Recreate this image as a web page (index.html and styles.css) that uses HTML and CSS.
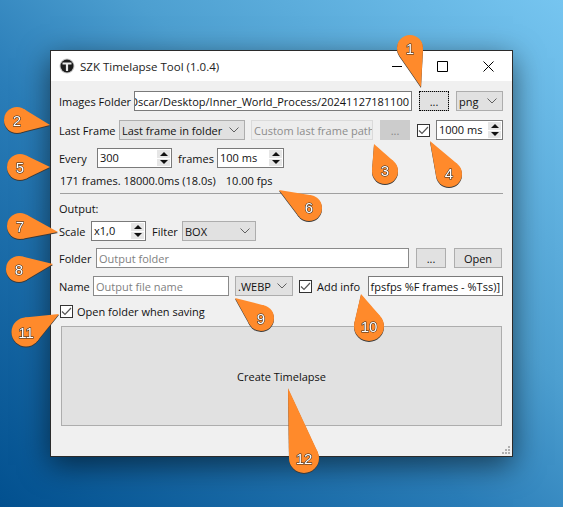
FILE: index.html
```html
<!DOCTYPE html>
<html lang="en">
<head>
<meta charset="utf-8">
<title>SZK Timelapse Tool</title>
<link rel="stylesheet" href="styles.css">
</head>
<body>
<main class="window">
  <header class="titlebar">
    <svg class="app-icon" width="16" height="16" viewBox="0 0 16 16"><circle cx="8" cy="8" r="7.5" fill="#c8c8c8"/><circle cx="8" cy="8" r="6.5" fill="#1c1c1c"/><path d="M3.5 4.5h9v2h-3.4v6.5h-2.2V6.5H3.5z" fill="#e8e8e8"/></svg>
    <span class="title">SZK Timelapse Tool (1.0.4)</span>
    <div class="winbtns">
      <svg width="10" height="10" viewBox="0 0 10 10"><path d="M0 5.5h10" stroke="#000" fill="none"/></svg>
      <svg width="11" height="11" viewBox="0 0 11 11"><path d="M.5.5h10v10H.5z" stroke="#000" fill="none"/></svg>
      <svg width="11" height="11" viewBox="0 0 11 11"><path d="M.5.5l10 10M10.5.5l-10 10" stroke="#000" fill="none"/></svg>
    </div>
  </header>
  <section class="content">
    <div class="row">
      <span class="label w69">Images Folder</span>
      <div class="field w278 clip-left"><span>C:/Users/Oscar/Desktop/Inner_World_Process/20241127181100</span></div>
      <button class="btn w30 ml1 focused">...</button>
      <div class="select w47 ml1">png<svg class="chev" width="10" height="6" viewBox="0 0 10 6"><path d="M.5.5L5 5 9.500.5" /></svg></div>
    </div>
    <div class="row mt9">
      <span class="label w54">Last Frame</span>
      <div class="select w126">Last frame in folder<svg class="chev" width="10" height="6" viewBox="0 0 10 6"><path d="M.5.5L5 5 9.500.5" /></svg></div>
      <div class="field disabled w122">Custom last frame path</div>
      <button class="btn btn-disabled w30 ml1">...</button>
      <span class="check ml1"><svg width="11" height="9" viewBox="0 0 11 9"><path d="M1 4.500l3 3 6-6.500"/></svg></span>
      <div class="spin w67"><span class="spin-value">1000 ms</span><span class="spin-btns"><i class="up"></i><i class="down"></i></span></div>
    </div>
    <div class="row mt8">
      <span class="label w32">Every</span>
      <div class="spin w75"><span class="spin-value">300</span><span class="spin-btns"><i class="up"></i><i class="down"></i></span></div>
      <span class="label w33">frames</span>
      <div class="spin w67"><span class="spin-value">100 ms</span><span class="spin-btns"><i class="up"></i><i class="down"></i></span></div>
    </div>
    <div class="info"><span>171 frames. 18000.0ms (18.0s)</span><span>10.00 fps</span></div>
    <hr class="sep">
    <div class="heading">Output:</div>
    <div class="row mt4">
      <span class="label w26">Scale</span>
      <div class="spin w55"><span class="spin-value">x1,0</span><span class="spin-btns"><i class="up"></i><i class="down"></i></span></div>
      <span class="label w24">Filter</span>
      <div class="select w74">BOX<svg class="chev" width="10" height="6" viewBox="0 0 10 6"><path d="M.5.5L5 5 9.500.5" /></svg></div>
    </div>
    <div class="row mt7">
      <span class="label w31">Folder</span>
      <div class="field placeholder w313">Output folder</div>
      <button class="btn w30 ml1">...</button>
      <button class="btn w48 ml2">Open</button>
    </div>
    <div class="row mt8">
      <span class="label w28">Name</span>
      <div class="field placeholder w136">Output file name</div>
      <div class="select w58">.WEBP<svg class="chev" width="10" height="6" viewBox="0 0 10 6"><path d="M.5.5L5 5 9.500.5" /></svg></div>
      <label class="checkline"><span class="check"><svg width="11" height="9" viewBox="0 0 11 9"><path d="M1 4.500l3 3 6-6.500"/></svg></span><span class="label w45">Add info</span></label>
      <div class="field w135 clip-left"><span>fpsfps %F frames - %Tss)]</span></div>
    </div>
    <label class="checkline open-line"><span class="check"><svg width="11" height="9" viewBox="0 0 11 9"><path d="M1 4.500l3 3 6-6.500"/></svg></span><span class="label">Open folder when saving</span></label>
    <button class="btn create">Create Timelapse</button>
  </section>
  <svg class="grip" width="9" height="9" viewBox="0 0 9 9"><path d="M6 0h2v2H6zM3 3h2v2H3zM6 3h2v2H6zM0 6h2v2H0zM3 6h2v2H3zM6 6h2v2H6z"/></svg>
</main>
<svg class="pins" width="563" height="507" viewBox="0 0 563 507">
  <g class="pin"><circle cx="410" cy="48" r="13"/><polygon points="399.300,55.400 421,87 423,48.700"/><text x="410" y="54">1</text></g>
  <g class="pin"><circle cx="17" cy="120" r="13"/><polygon points="20.200,132.600 50,125 23.800,109"/><text x="17" y="126">2</text></g>
  <g class="pin"><circle cx="385" cy="171" r="13"/><polygon points="393.600,161.200 374,144 372,170"/><text x="385" y="176">3</text></g>
  <g class="pin"><circle cx="449" cy="174" r="13"/><polygon points="457.400,164 430,141 436.200,176.300"/><text x="449" y="179">4</text></g>
  <g class="pin"><circle cx="20" cy="167" r="13"/><polygon points="25.600,178.700 50,167 25.600,155.300"/><text x="20" y="173">5</text></g>
  <g class="pin"><circle cx="309" cy="208" r="13"/><polygon points="311.100,195.200 279,190 298.700,215.900"/><text x="309" y="213">6</text></g>
  <g class="pin"><circle cx="20" cy="226" r="13"/><polygon points="22.400,238.800 58,232 26.200,214.600"/><text x="20" y="232">7</text></g>
  <g class="pin"><circle cx="19" cy="269" r="13"/><polygon points="25.600,280.200 53,264 22.200,256.400"/><text x="19" y="275">8</text></g>
  <g class="pin"><circle cx="261" cy="318" r="13"/><polygon points="264.200,305.400 235,298 249.600,324.300"/><text x="261" y="324">9</text></g>
  <g class="pin"><circle cx="369" cy="326" r="15"/><polygon points="380.300,316.200 361,294 354.400,322.600"/><text x="369" y="332">10</text></g>
  <g class="pin"><circle cx="26" cy="332" r="14.500"/><polygon points="37.300,341.100 59,314 24.500,317.600"/><text x="26" y="338">11</text></g>
  <g class="pin"><circle cx="304" cy="458" r="15"/><polygon points="317.600,451.700 288,388 289,458.200"/><text x="304" y="464">12</text></g>
</svg>
</body>
</html>
```
FILE: styles.css
```css
* { box-sizing: border-box; }
html, body { margin: 0; height: 100%; }
body {
  width: 563px;
  height: 507px;
  overflow: hidden;
  position: relative;
  background: linear-gradient(to top right, #02508f 0%, #2a7db8 42%, #4d9fd0 62%, #76c5f0 100%);
  font-family: "Open Sans", "Noto Sans", sans-serif;
  font-size: 11px;
  color: #111;
}
.window {
  position: absolute;
  left: 50px;
  top: 50px;
  width: 463px;
  height: 407px;
  background: #f0f0f0;
  border: 1px solid #2b2b2b;
  box-shadow: 0 8px 28px rgba(0, 0, 0, .55);
  display: flex;
  flex-direction: column;
}
.titlebar {
  height: 30px;
  background: #fff;
  display: flex;
  align-items: center;
  padding-left: 8px;
}
.title { margin-left: 5px; font-size: 11.500px; color: #222; }
.app-icon { flex: none; }
.winbtns { margin-left: auto; display: flex; align-items: center; }
.winbtns svg { display: block; }
.winbtns svg:nth-child(1) { margin-right: 35px; }
.winbtns svg:nth-child(2) { margin-right: 35px; }
.winbtns svg:nth-child(3) { margin-right: 18px; }
.content { padding: 10px 9px 0 8px; display: flex; flex-direction: column; }
.row { display: flex; align-items: center; gap: 6px; height: 20px; }
.mt4 { margin-top: 4px; }
.mt7 { margin-top: 7px; }
.mt8 { margin-top: 8px; }
.mt9 { margin-top: 9px; }
.ml1 { margin-left: 1px; }
.ml2 { margin-left: 2px; }
.label { white-space: nowrap; flex: none; }
.w24 { width: 24px; } .w26 { width: 26px; } .w28 { width: 28px; } .w30 { width: 30px; }
.w31 { width: 31px; } .w32 { width: 32px; } .w33 { width: 33px; } .w45 { width: 45px; }
.w47 { width: 47px; } .w48 { width: 48px; } .w54 { width: 54px; } .w55 { width: 55px; }
.w58 { width: 58px; } .w67 { width: 67px; } .w69 { width: 69px; } .w74 { width: 74px; }
.w75 { width: 75px; } .w122 { width: 122px; } .w126 { width: 126px; } .w135 { width: 135px; }
.w136 { width: 136px; } .w278 { width: 278px; } .w313 { width: 313px; }
.field {
  flex: none;
  height: 20px;
  background: #fff;
  border: 1px solid #7a7a7a;
  padding: 0 2px;
  display: flex;
  align-items: center;
  overflow: hidden;
  white-space: nowrap;
}
.clip-left { justify-content: flex-end; padding-right: 2px; }
.clip-left span { flex: none; }
.placeholder { color: #7f7f7f; border-color: #8a8a8a; }
.disabled { background: #ededed; border-color: #dadada; color: #8c8c8c; }
.btn {
  flex: none;
  height: 20px;
  padding: 0;
  background: #e1e1e1;
  border: 1px solid #adadad;
  font: inherit;
  color: #111;
}
.focused { outline: 1px dotted #000; outline-offset: -1px; }
.btn-disabled { background: #cccccc; border-color: #cccccc; color: #858585; }
.select {
  flex: none;
  height: 20px;
  background: #e1e1e1;
  border: 1px solid #adadad;
  padding: 0 2px;
  display: flex;
  align-items: center;
  justify-content: space-between;
  white-space: nowrap;
  padding-right: 5px;
}
.chev { fill: none; stroke: #606060; flex: none; }
.check {
  flex: none;
  width: 13px;
  height: 13px;
  background: #fff;
  border: 1px solid #333;
  display: flex;
  align-items: center;
  justify-content: center;
}
.check svg { fill: none; stroke: #555; stroke-width: 1.200; }
.checkline { display: flex; align-items: center; gap: 5px; flex: none; }
.open-line { gap: 4px; margin: 9px 0 0 1px; height: 13px; }
.spin {
  flex: none;
  height: 20px;
  background: #fff;
  border: 1px solid #7a7a7a;
  display: flex;
  align-items: stretch;
}
.spin-value { flex: 1; padding-left: 2px; line-height: 18px; white-space: nowrap; overflow: hidden; }
.spin-btns { flex: none; width: 15px; display: flex; flex-direction: column; gap: 1px; padding: 1px; }
.spin-btns i {
  flex: 1;
  background: #e6e6e6;
  display: flex;
  align-items: center;
  justify-content: center;
}
.spin-btns i::before {
  content: "";
  width: 0;
  height: 0;
  border-left: 4px solid transparent;
  border-right: 4px solid transparent;
}
.up::before { border-bottom: 4px solid #111; }
.down::before { border-top: 4px solid #111; }
.info { margin: 5px 0 0 1px; height: 16px; line-height: 16px; display: flex; gap: 10px; white-space: nowrap; }
.sep { margin: 4px 0 0 1px; height: 1px; border: 0; background: #a0a0a0; width: 443px; }
.heading { margin-top: 7px; height: 16px; line-height: 16px; }
.create { width: 441px; height: 100px; margin: 8px 0 0 2px; }
.grip { position: absolute; right: 1px; bottom: 1px; fill: #b0b0b0; }
.pins { position: absolute; left: 0; top: 0; pointer-events: none; }
.pin { filter: drop-shadow(0 1px 0 #3a3a3a); }
.pin circle, .pin polygon { fill: #ff8a2b; }
.pin text {
  font-family: "Liberation Sans", sans-serif;
  font-size: 15px;
  fill: #fff;
  stroke: #222;
  stroke-width: 1px;
  paint-order: stroke;
  text-anchor: middle;
}
```
